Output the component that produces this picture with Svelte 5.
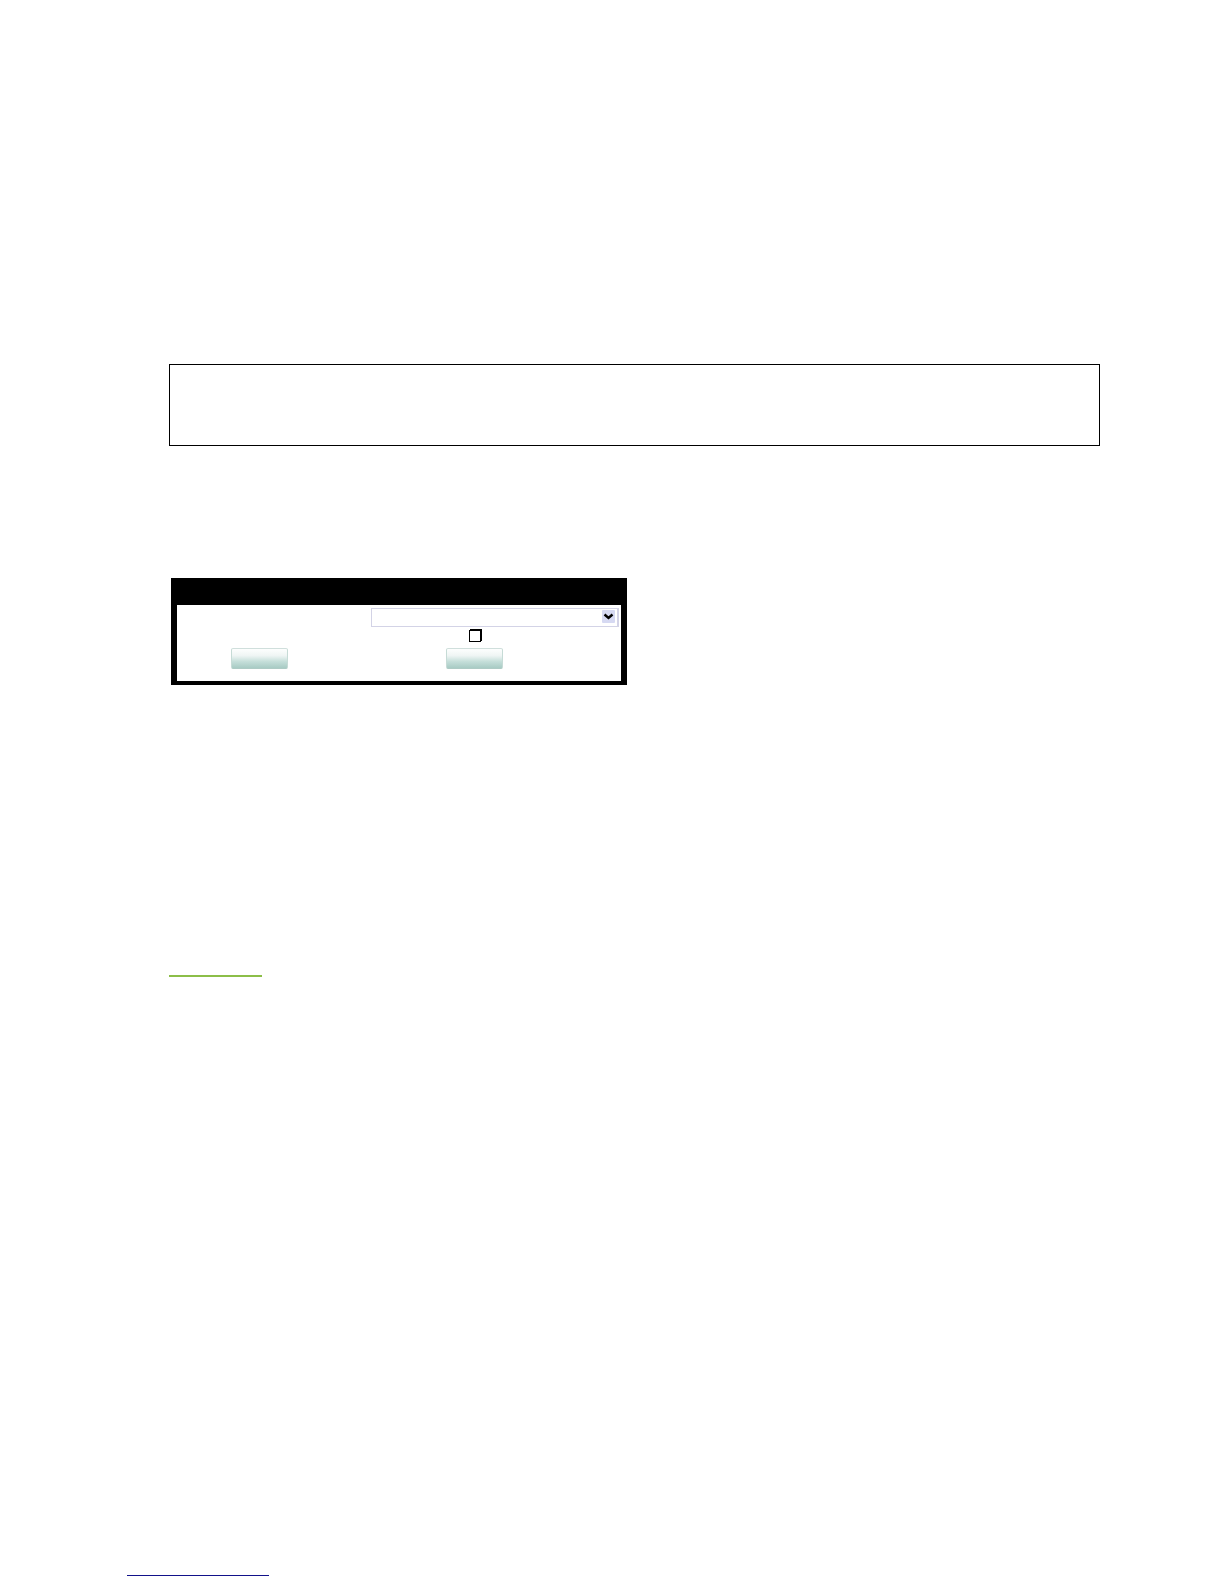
<script>
  let choice = $state('');
  let checked = $state(false);

  const buttons = ['Apply', 'Reset'];
</script>

<div class="page">
  <main>
    <section class="note" aria-label="Note"></section>

    <form class="panel" onsubmit={(e) => e.preventDefault()}>
      <div class="title-bar"></div>
      <div class="panel-body">
        <div class="select-row">
          <select aria-label="Option" bind:value={choice}>
            <option value=""></option>
          </select>
          <svg class="arrow" viewBox="0 0 13 13" aria-hidden="true">
            <rect width="13" height="13" rx="1" fill="#d6d9f2" />
            <path d="M2.5 4.5 L6.5 8 L10.5 4.5" fill="none" stroke="#000" stroke-width="2.4" />
          </svg>
        </div>
        <div class="check-row">
          <input type="checkbox" aria-label="Enable" bind:checked />
        </div>
        <div class="button-row">
          {#each buttons as name}
            <button type="submit" aria-label={name}></button>
          {/each}
        </div>
      </div>
    </form>

    <a class="section-link" href="#section" aria-label="Section"></a>
  </main>

  <footer>
    <a class="footer-link" href="#home" aria-label="Home"></a>
  </footer>
</div>

<style>
  :global(body) {
    margin: 0;
    background: #fff;
    font-family: "Liberation Sans", Arial, sans-serif;
  }

  .page {
    box-sizing: border-box;
    padding: 364px 124px 8px 127px;
  }

  main {
    padding-left: 42px;
  }

  .note {
    box-sizing: border-box;
    min-height: 82px;
    border: 1px solid #000;
  }

  .panel {
    box-sizing: border-box;
    max-width: 456px;
    margin: 132px 0 0 2px;
    padding: 0 6px 4px;
    background: #000;
  }

  .title-bar {
    height: 27px;
  }

  .panel-body {
    padding: 3px 2px 12px;
    background: #fff;
  }

  .select-row {
    position: relative;
    width: 248px;
    height: 19px;
    margin-left: auto;
  }

  select {
    display: block;
    width: 100%;
    height: 100%;
    border: 1px solid #d3d3e6;
    border-right-width: 2px;
    border-radius: 0;
    background: #fff;
    appearance: none;
  }

  .arrow {
    position: absolute;
    top: 2px;
    right: 4px;
    width: 13px;
    height: 13px;
    pointer-events: none;
  }

  .check-row {
    padding: 3px 0 6px 290px;
  }

  input {
    display: block;
    box-sizing: border-box;
    width: 12px;
    height: 12px;
    margin: 0;
    border: 1px solid #000;
    background: #fff;
    box-shadow: 1px -1px 0 #000;
    appearance: none;
  }

  input:checked {
    background: #000;
  }

  .button-row {
    display: flex;
    gap: 158px;
    padding-left: 52px;
  }

  button {
    width: 57px;
    height: 21px;
    padding: 0;
    border: 1px solid #c6dbd6;
    border-top-color: #d0dfdc;
    border-bottom-color: #aecbc5;
    border-radius: 2px;
    background: linear-gradient(#fdfefe, #eff5f4 35%, #c6dfda 65%, #a8cbc4);
  }

  .section-link {
    display: block;
    width: 93px;
    margin-top: 290px;
    border-bottom: 2px solid #8cbe48;
  }

  .footer-link {
    display: block;
    width: 142px;
    margin-top: 598px;
    border-bottom: 1px solid #12128a;
  }
</style>
